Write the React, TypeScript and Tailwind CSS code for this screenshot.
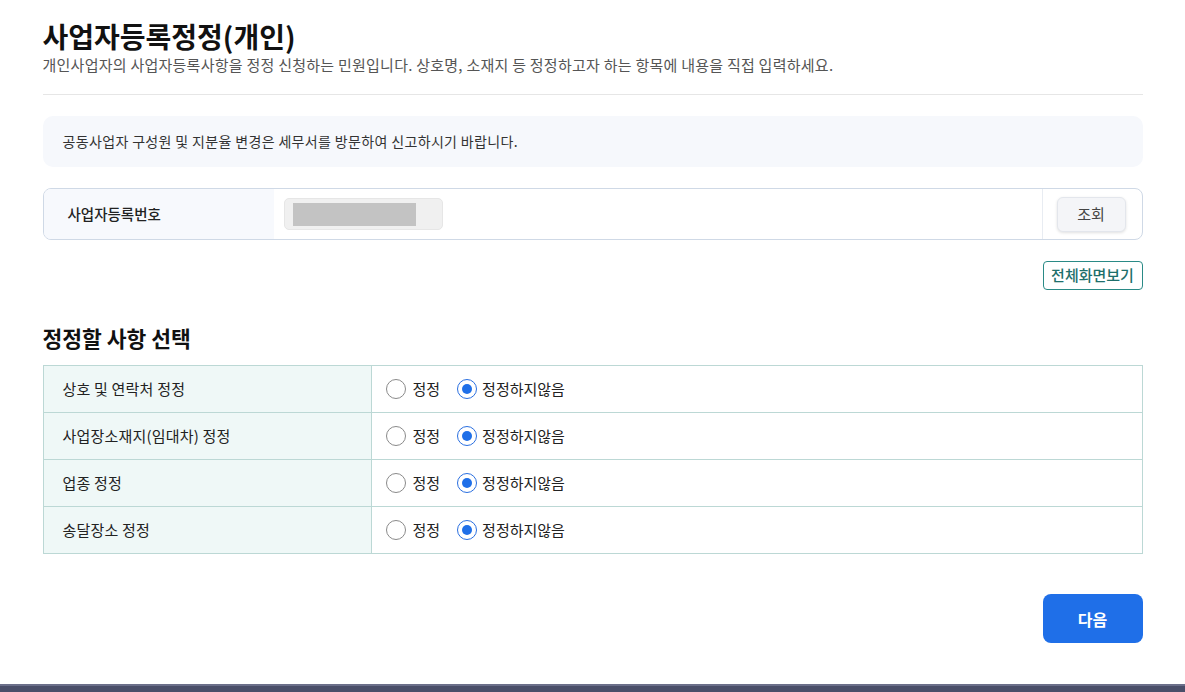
const rows = [
  "상호 및 연락처 정정",
  "사업장소재지(임대차) 정정",
  "업종 정정",
  "송달장소 정정",
];

function Radio({ checked }: { checked?: boolean }) {
  return (
    <span
      className={
        checked
          ? "flex h-[20px] w-[20px] items-center justify-center rounded-full border-[1.5px] border-[#2a6fe0] bg-white"
          : "flex h-[20px] w-[20px] items-center justify-center rounded-full border border-[#8a8a8a] bg-white"
      }
    >
      {checked && <span className="h-[10px] w-[10px] rounded-full bg-[#1f6fe8]" />}
    </span>
  );
}

export default function App() {
  return (
    <div
      className="flex min-h-[692px] flex-col bg-white text-[#222]"
      style={{ fontFamily: '"Noto Sans CJK KR", "Noto Sans", sans-serif' }}
    >
      <div className="mx-auto w-[1100px] flex-1 pt-[18px]">
        <h1 className="text-[28px] font-bold leading-[37px] text-[#111]">
          사업자등록정정(개인)
        </h1>
        <p className="text-[15px] leading-[20px] tracking-[0.25px] text-[#555]">
          개인사업자의 사업자등록사항을 정정 신청하는 민원입니다. 상호명, 소재지 등 정정하고자 하는 항목에 내용을 직접 입력하세요.
        </p>
        <div className="mt-[19px] h-px bg-[#e6e6e6]" />

        <div className="mt-[21px] flex h-[51px] items-center rounded-[10px] bg-[#f6f8fc] px-[20px] text-[14px] tracking-[0.35px] text-[#333]">
          공동사업자 구성원 및 지분율 변경은 세무서를 방문하여 신고하시기 바랍니다.
        </div>

        <div className="mt-[21px] flex h-[52px] items-stretch overflow-hidden rounded-[8px] border border-[#cfd9e6]">
          <div className="flex w-[230px] items-center bg-[#f7f9fd] pl-[24px] text-[14.5px] font-medium text-[#222]">
            사업자등록번호
          </div>
          <div className="flex flex-1 items-center pl-[10px]">
            <div className="flex h-[32px] w-[159px] items-center rounded-[5px] border border-[#e6e6e6] bg-[#f0f0f0] pl-[8px]">
              <div className="h-[23px] w-[123px] bg-[#c3c3c3]" />
            </div>
          </div>
          <div className="flex items-center border-l border-[#e8ecf2] pl-[14px] pr-[16px]">
            <button className="h-[35px] w-[69px] rounded-[6px] border border-[#e3e6ec] bg-[#f4f5f8] text-[15px] text-[#444] shadow-[0_1px_3px_rgba(0,0,0,0.12)]">
              조회
            </button>
          </div>
        </div>

        <div className="mt-[21px] flex justify-end">
          <button className="h-[29px] w-[100px] rounded-[4px] border border-[#2a8a86] bg-white text-[15px] font-medium text-[#1e6f6b]">
            전체화면보기
          </button>
        </div>

        <h2 className="mt-[34px] text-[21.5px] font-bold leading-[28px] text-[#111]">
          정정할 사항 선택
        </h2>

        <div className="mt-[13px] border border-[#bcd8d5]">
          {rows.map((r, i) => (
            <div
              key={r}
              className={
                i === 0
                  ? "flex h-[46px] items-stretch"
                  : "flex h-[47px] items-stretch border-t border-[#bcd8d5]"
              }
            >
              <div className="flex w-[328px] items-center border-r border-[#bcd8d5] bg-[#eff8f7] pl-[19px] text-[15px] tracking-[0.2px] text-[#222]">
                {r}
              </div>
              <div className="flex items-center pl-[14px] text-[15px] text-[#222]">
                <label className="flex items-center gap-[7px]">
                  <Radio />
                  <span>정정</span>
                </label>
                <label className="ml-[17px] flex items-center gap-[5px]">
                  <Radio checked />
                  <span>정정하지않음</span>
                </label>
              </div>
            </div>
          ))}
        </div>

        <div className="mt-[40px] flex justify-end">
          <button className="h-[49px] w-[100px] rounded-[8px] bg-[#1f6fe8] text-[16px] font-semibold text-white">
            다음
          </button>
        </div>
      </div>
      <div className="h-[8px] border-t-2 border-[#6b6f8a] bg-[#4a4e69]" />
    </div>
  );
}
